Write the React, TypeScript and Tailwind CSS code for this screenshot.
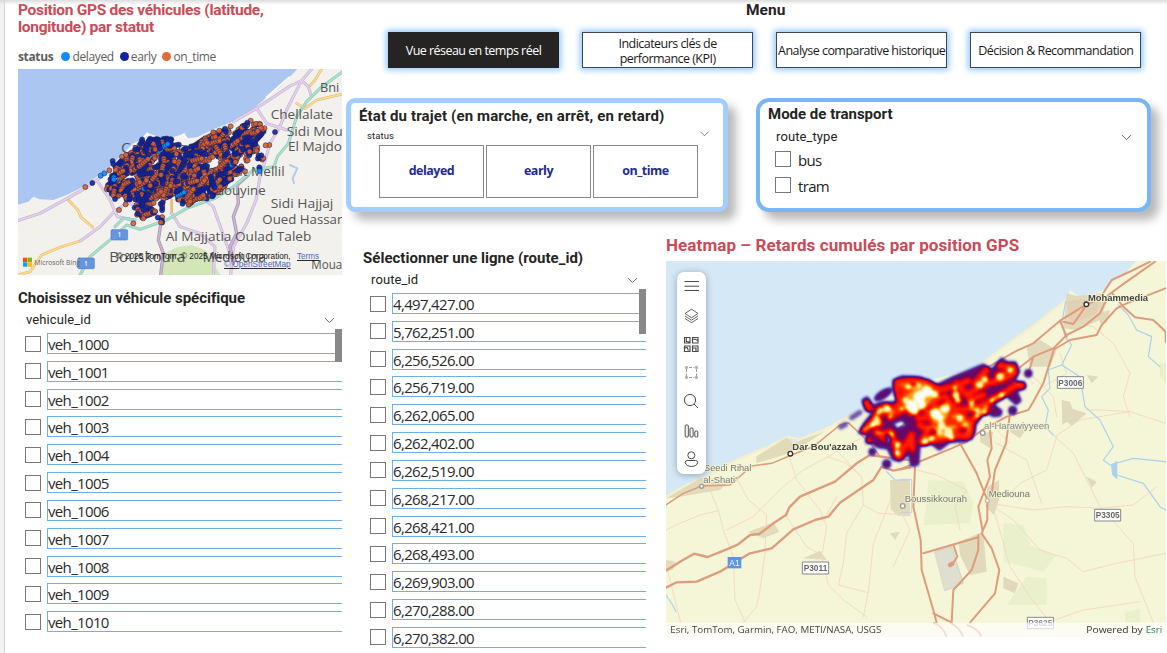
import React from "react";

const vehicles = Array.from({ length: 11 }, (_, i) => `veh_${1000 + i}`);
const routes = [
  "4,497,427.00", "5,762,251.00", "6,256,526.00", "6,256,719.00", "6,262,065.00", "6,262,402.00", "6,262,519.00",
  "6,268,217.00", "6,268,421.00", "6,268,493.00", "6,269,903.00", "6,270,288.00", "6,270,382.00",
];

type Pt = [number, number];

function random(seed: number) {
  let s = seed;
  return () => {
    s = (s * 1664525 + 1013904223) % 4294967296;
    return s / 4294967296;
  };
}

function inside(x: number, y: number, poly: Pt[]) {
  let hit = false;
  for (let i = 0, j = poly.length - 1; i < poly.length; j = i++) {
    const [xi, yi] = poly[i];
    const [xj, yj] = poly[j];
    if (yi > y !== yj > y && x < ((xj - xi) * (y - yi)) / (yj - yi) + xi) hit = !hit;
  }
  return hit;
}

const fleetArea: Pt[] = [
  [316, 572], [335, 520], [350, 485], [375, 475], [420, 430], [425, 415], [510, 415], [560, 445], [630, 405], [690, 385],
  [755, 372], [790, 370], [796, 390], [765, 425], [790, 480], [750, 470], [720, 515], [690, 545], [640, 590], [555, 620], [525, 590],
  [488, 600], [488, 668], [476, 668], [470, 635], [430, 658], [405, 640], [400, 605], [345, 590],
];

const palette = ["#d9602f", "#12239e", "#118dff"];

function buildDots() {
  const r = random(77);
  const dots: { x: number; y: number; c: string }[] = [];
  for (let n = 0; n < 1150; n++) {
    let x = 310 + r() * 490;
    let y = 365 + r() * 305;
    if (!inside(x, y, fleetArea)) continue;
    const pocket = (x > 395 && x < 450 && y > 530 && y < 560) || (x > 600 && x < 660 && y > 475 && y < 500) || (x > 440 && x < 480 && y > 600 && y < 635);
    if (pocket) continue;
    const a = r() < 0.35 ? 1 + r() * 1.2 : -0.9 + r() * 0.8;
    const len = 2 + Math.floor(r() * 5);
    const k = r();
    const main = k < 0.5 ? 0 : k < 0.97 ? 1 : 2;
    for (let i = 0; i < len; i++) {
      if (inside(x, y, fleetArea)) {
        dots.push({ x, y, c: palette[r() < 0.8 ? main : Math.floor(r() * 2.1)] });
      }
      x += Math.cos(a) * 7;
      y += Math.sin(a) * 7;
    }
  }
  const extra: [number, number, number][] = [
    [256, 561, 0], [277, 549, 1], [302, 527, 2], [313, 520, 2], [328, 511, 0], [338, 483, 1], [340, 492, 1], [366, 470, 0],
    [378, 465, 0], [406, 446, 1], [345, 597, 1], [377, 613, 0], [357, 630, 0], [400, 670, 0], [483, 667, 0], [825, 396, 1],
    [808, 435, 0], [797, 436, 0], [779, 507, 2], [778, 502, 1], [778, 513, 2], [640, 397, 0], [692, 379, 0], [752, 362, 0], [735, 514, 0],
    [726, 383, 0], [734, 376, 1], [742, 368, 1], [658, 392, 0], [675, 386, 1],
    [790, 475, 0], [784, 466, 1], [780, 373, 0], [783, 384, 0], [773, 393, 0], [430, 655, 0], [413, 641, 1],
  ];
  extra.forEach(([x, y, c]) => dots.push({ x, y, c: palette[c] }));
  return dots;
}

const dots = buildDots();

function Chevron({ className }: { className?: string }) {
  return (
    <svg viewBox="0 0 12 8" className={className} fill="none" stroke="#555" strokeWidth="1">
      <path d="M.8 1.2 6 6.4l5.2-5.2" />
    </svg>
  );
}

function Checkbox() {
  return <span className="block size-4 shrink-0 border border-[#7a7876] bg-white" />;
}

function CheckList({ items, thumb }: { items: string[]; thumb: string }) {
  return (
    <div className="relative">
      {items.map((item) => (
        <div key={item} className="flex h-[27.84px] items-start">
          <div className="mt-[2.5px]">
            <Checkbox />
          </div>
          <div className="ml-[6px] h-[21px] flex-1 border border-r-0 border-[#6fb0ec] font-['Open_Sans',sans-serif] text-[15px] leading-[20px] tracking-[-0.66px] text-[#2b2a29]">
            {item}
          </div>
        </div>
      ))}
      <div className={`absolute -top-1 right-0 w-[7px] bg-[#8a8886] ${thumb}`} />
    </div>
  );
}

type LabelProps = { x: number; y: number; w: number; size: number; fill?: string; font?: string; weight?: number; children: string; halo?: string };

function Label({ x, y, w, size, fill = "#555", font = "Open Sans", weight = 400, halo, children }: LabelProps) {
  return (
    <text
      x={x}
      y={y}
      textLength={w}
      lengthAdjust="spacingAndGlyphs"
      fontSize={size}
      fontFamily={`"${font}", sans-serif`}
      fontWeight={weight}
      fill={fill}
      stroke={halo}
      strokeWidth={halo ? 5 : undefined}
      paintOrder="stroke"
    >
      {children}
    </text>
  );
}

const lilacRoads =
  "M54 662 120 640 190 602 250 568 290 540 330 510M242 722 300 680 345 632 380 610 450 620M290 540 330 600 352 650 400 660M700 365 770 325 870 258 905 242 935 207M770 325 800 370 860 390M905 242 880 290 860 330 840 380 810 430 790 500 780 530 768 600 740 670 700 740 692 825M600 590 640 620 668 700 690 760M515 640 540 680 600 700 645 740 640 825M905 242 925 260 935 290";
const greenRoads =
  "M1028 215 960 265 920 305 890 350 865 430 832 470 822 500 760 510 700 560 645 595 560 625 500 660 420 688 380 675 330 720 270 770 240 825M345 680 370 655 405 660";
const amberRoads =
  "M205 600 235 632 243 652 278 682M54 825 90 815 125 765 180 742 242 722M965 207 945 240 925 262M1028 282 985 292 950 300 915 325 890 310";
const mauveRoads = "M484 660 475 720 490 760 482 825M745 525 712 555 715 610 700 650 710 700 690 740 700 790";

function FleetMap() {
  return (
    <svg viewBox="18 69 324 206" className="block h-[206px] w-[324px]">
      <g transform="scale(.33333)" fill="none" strokeLinejoin="round" strokeLinecap="round">
        <rect x="54" y="207" width="974" height="620" fill="#f3f1ed" />
        <path d="M54 207H892L868 232 840 262 800 292 770 318 740 345 690 368 640 388 590 412 560 415 548 402 530 408 500 418 445 400 440 412 400 430 360 470 330 500 290 530 250 560 200 585 160 600 120 598 100 590 85 605 54 614Z" fill="#abc6f1" />
        <path d="M868 232 800 292 M540 412 552 402 560 416 M432 412 442 400 450 416" stroke="#fbfaf7" strokeWidth="6" />
        <path d="M486 825 495 760 530 742 575 735 620 752 640 790 662 825Z" fill="#d3e6b8" />
        <g stroke="#f8efd9" strokeWidth="3">
          <path d="M54 700 160 690 250 720 360 740M90 620 100 700 150 760M860 560 940 600 1028 640M830 480 900 540 960 530 1028 560M880 380 940 460 1028 480M740 620 830 600 900 690 1028 720M560 640 620 680 700 690M800 825 830 740 900 700M300 560 320 620 350 650" />
        </g>
        <path d={amberRoads} stroke="#e0b568" strokeWidth="8" />
        <path d="M515 600V640" stroke="#e8bc6a" strokeWidth="8" />
        <path d={amberRoads} stroke="#fbdc94" strokeWidth="5" />
        <path d={lilacRoads} stroke="#c3abd2" strokeWidth="9" />
        <path d={lilacRoads} stroke="#e0d0ea" strokeWidth="6" />
        <path d={mauveRoads} stroke="#ab97b6" strokeWidth="10" />
        <path d={mauveRoads} stroke="#c8b8d0" strokeWidth="5" />
        <path d={greenRoads} stroke="#8ecab5" strokeWidth="9" />
        <path d={greenRoads} stroke="#ade0d0" strokeWidth="5" />
        <path d="m870 495 22 10-14 30 4 15" stroke="#b5c9ea" strokeWidth="6" />
        <rect x="333" y="689" width="50" height="31" rx="4" fill="#6496e0" stroke="#517cc3" strokeWidth="2" />
        <rect x="233" y="774" width="50" height="32" rx="4" fill="#6496e0" stroke="#517cc3" strokeWidth="2" />
      </g>
      <g transform="scale(.33333)">
        <Label x={353} y={712} w={10} size={22} fill="#fff" weight={600}>1</Label>
        <Label x={253} y={797} w={10} size={22} fill="#fff" weight={600}>1</Label>
        <Label x={960} y={275} w={58} size={39}>Bni</Label>
        <Label x={812} y={356} w={187} size={39}>Chellalate</Label>
        <Label x={860} y={408} w={168} size={39}>Sidi Mou</Label>
        <Label x={864} y={454} w={162} size={39}>El Majdo</Label>
        <Label x={363} y={458} w={246} size={46}>Casablanca</Label>
        <Label x={718} y={529} w={136} size={39}>it Mellil</Label>
        <Label x={640} y={585} w={157} size={39}>laouyine</Label>
        <Label x={812} y={625} w={188} size={39}>Sidi Hajjaj</Label>
        <Label x={787} y={672} w={240} size={39}>Oued Hassar</Label>
        <Label x={497} y={723} w={437} size={39}>Al Majjatia Oulad Taleb</Label>
        <Label x={328} y={786} w={228} size={41}>Bouskoura</Label>
        <Label x={608} y={786} w={190} size={41}>Mediouna</Label>
        <Label x={934} y={808} w={93} size={37}>Moua</Label>
        <g stroke="#131c55" strokeOpacity=".75" strokeWidth="2" fillOpacity=".9">
          {dots.map((d, i) => (
            <circle key={i} cx={d.x} cy={d.y} r="7.6" fill={d.c} />
          ))}
        </g>
        <path fill="#f25022" d="M69 773h13v13H69z" />
        <path fill="#7fba00" d="M83 773h13v13H83z" />
        <path fill="#00a4ef" d="M69 787h13v13H69z" />
        <path fill="#ffb900" d="M83 787h13v13H83z" />
        <Label x={103} y={795} w={137} size={24} fill="#666">Microsoft Bing</Label>
        <Label x={350} y={777} w={522} size={25} fill="#222" font="Liberation Sans">© 2025 TomTom, © 2025 Microsoft Corporation,</Label>
        <g textDecoration="underline">
          <Label x={891} y={777} w={66} size={25} fill="#4d66b8" font="Liberation Sans">Terms</Label>
          <Label x={672} y={801} w={200} size={25} fill="#4d66b8" font="Liberation Sans">© OpenStreetMap</Label>
        </g>
      </g>
    </svg>
  );
}

const hotspots: [number, number, number][] = [
  [238, 155, 17], [262, 138, 16], [215, 182, 17], [225, 200, 10], [285, 148, 10], [245, 180, 12], [285, 205, 15], [315, 188, 14],
  [300, 218, 10], [348, 150, 12], [354, 166, 9], [140, 190, 12], [120, 197, 8], [112, 229, 13], [98, 240, 8], [325, 262, 14], [305, 240, 11],
  [335, 278, 8], [298, 262, 9], [480, 94, 12], [396, 175, 8], [412, 195, 7], [435, 202, 7], [360, 220, 10], [375, 240, 8], [410, 212, 6],
  [420, 120, 10], [435, 103, 9], [205, 125, 8], [235, 120, 8], [155, 268, 7], [175, 298, 9], [172, 325, 8], [255, 290, 9], [275, 280, 8],
  [150, 215, 7], [510, 75, 8], [455, 165, 7], [485, 150, 8], [345, 128, 6], [195, 165, 8], [185, 190, 6],
];

function HeatLayer() {
  return (
    <g transform="translate(840 345) scale(.33333)">
      <filter id="heat" x="-60" y="0" width="720" height="420" filterUnits="userSpaceOnUse" colorInterpolationFilters="sRGB">
        <feGaussianBlur stdDeviation="4.2" />
        <feColorMatrix values="0 0 0 1 0  0 0 0 1 0  0 0 0 1 0  0 0 0 1 0" />
        <feComponentTransfer>
          <feFuncR type="table" tableValues=".3 .28 .26 .4 .82 1 1 1 1 1 1" />
          <feFuncG type="table" tableValues=".2 .18 .12 .03 0 .05 .3 .62 .9 1 1" />
          <feFuncB type="table" tableValues=".75 .68 .6 .4 .1 0 0 .1 .55 1 1" />
          <feFuncA type="table" tableValues="0 .6 .95 1 1 1 1 1 1 1 1" />
        </feComponentTransfer>
      </filter>
      <g filter="url(#heat)" fill="none" stroke="#000" strokeLinecap="round" strokeLinejoin="round">
        <path
          fill="#000"
          fillRule="evenodd"
          stroke="none"
          opacity=".3"
          d="M54 264 72 232 95 205 75 196 65 165 82 154 100 180 125 170 165 170 170 145 158 130 158 105 185 93 240 95 290 118 340 94 380 78 430 57 455 72 485 38 502 50 527 50 540 78 525 108 555 112 558 128 532 140 544 168 528 180 500 155 462 178 487 198 482 213 460 215 435 202 408 240 405 265 380 290 330 292 298 316 275 298 240 306 236 360 213 365 206 330 180 350 158 345 142 312 115 308 82 290 78 268ZM160 236 185 226 200 240 172 250ZM130 274 150 264 158 282 142 292Z"
        />
        <g opacity=".31">
          <ellipse cx="130" cy="148" rx="30" ry="11" transform="rotate(-32 130 148)" fill="#000" />
          {[[565, 85, 11], [518, 196, 12], [140, 357, 12], [97, 320, 10], [545, 122, 11], [85, 287, 9]].map(([x, y, r]) => (
            <circle key={x} cx={x} cy={y} r={r} fill="#000" stroke="none" />
          ))}
        </g>
        <path d="M60 202 35 218M17 238 2 246" strokeWidth="14" opacity=".16" />
        <g opacity=".33" strokeWidth="18">
          <path d="M72 258 100 228 115 205 160 195 185 170 170 145 172 112 215 106 262 112 300 135 350 122 385 108M405 115 440 75M480 62 520 68 522 85 485 105 440 115 405 135 380 150 350 115 M315 155 330 175 350 195 400 190 450 170 500 140 530 118M110 262 135 280M152 262 165 295 178 335 198 300 215 270 M240 240 265 255 245 290 310 280 350 270 390 275 395 225 440 190M80 175 88 188M215 270 216 310M160 210 195 190M235 220 285 215 310 235 360 225 300 190 250 165 205 145M390 165 430 150" />
          <path d="M190 130 270 130 300 160 240 190 210 200 195 170ZM260 200 340 190 370 230 330 275 290 250Z" fill="#000" />
        </g>
        <g opacity=".34" strokeWidth="11">
          <path d="M75 252 100 238 120 240M108 215 118 190 145 185 155 202M110 262 150 262M172 295 170 325M185 120 205 120 232 135 255 118M250 287 285 272 330 272M340 215 375 210 385 240M390 175 398 195 430 202M410 120 440 98M470 95 515 72M460 160 490 148M265 245 300 250 345 245M415 210 440 185M345 135 350 165M205 150 195 180 215 205M380 262 385 250" />
          <path d="M215 145 250 125 285 145 255 180 225 200 205 185ZM275 200 325 190 315 220 285 230Z" fill="#000" />
        </g>
        <g fill="#000" stroke="none" fillOpacity=".66">
          {hotspots.map(([x, y, r]) => (
            <circle key={`${x}-${y}`} cx={x} cy={y} r={r + 0.6} />
          ))}
        </g>
      </g>
    </g>
  );
}

const orangeWest =
  "M18 1022 60 995 102 971 143 981 200 958 233 944 270 915 298 912 340 880 378 855 388 832 420 800 525 755 590 700 630 675 700 685 750 690M18 1073 50 1057 110 1055 180 1025 245 985 270 970 335 955 400 898 465 870 505 860 540 818 640 750 665 710 700 722 750 712";
const orangeEast =
  "M0 718 70 690 155 655 200 635 247 600 320 560 385 540 400 515 430 460 460 365M-10 600 120 500 275 405 345 365 400 340 480 272 545 232 600 205 635 150 700 120 750 95M330 550 318 640 285 720 275 790M235 915 235 960 215 1020 160 1080 155 1178M180 640 230 730 262 810 262 870 245 910 275 955 298 1020 285 1090 210 1178M270 600 275 655 262 690 270 740 235 830 248 905M45 710 40 830 62 930 65 1020 100 1140 110 1178M70 970 235 922M160 945 172 980 155 1005M100 1150 155 1178M360 412 400 380 460 355 500 315 550 290 600 250 625 195 680 155 765 95M400 380 385 430M460 360 510 330 590 315 605 285 650 235 680 220 797 175M635 188 670 230 705 262 760 270 797 305V335M480 272 500 320M490 275 520 282 560 225";
const pinkWest =
  "M145 770 175 840 190 900 220 980 225 1110 255 1175M18 900 60 880 120 855 175 842M230 745 265 810 320 855 315 970 300 1080 290 1130 250 1178M200 900 280 860 370 770 430 720 505 680 570 640 640 610M388 680 410 750 480 840 500 890 485 980 505 1065 550 1110 620 1160M505 680 560 700 605 740 610 825 560 910 550 1000 535 1065 625 1088M610 825 655 850 750 855M700 790 640 940 625 1088 610 1160M380 860 440 950 475 970M18 1000 50 1130 62 1178M510 640 605 740M530 800 500 855";
const pinkEast =
  "M0 840 30 900 -20 1010M50 720 110 735 200 780 165 830 180 900M290 600 330 640M465 620 520 670 545 720 600 830 700 940 705 1040 760 1178M270 820 400 840 500 830 600 835 700 825 770 770M280 830 340 870 420 960 500 985 550 1025 650 1000 797 970M320 800 360 760 440 720 470 620M285 850 330 1010 390 1100 450 1178M520 280 580 290 640 340 690 430 670 500 690 560M560 540 600 540 690 545 797 580M480 370 500 430 430 470M390 430 460 500 470 560M300 380 400 460M440 1178 550 1140 720 1115M380 690 425 820M465 620 540 570 690 545M290 640 380 690";

function HeatMap() {
  return (
    <svg viewBox="666 261 500 376" className="block h-[376px] w-[500px]">
      <rect x="666" y="261" width="500" height="376" fill="#f5f5d7" />
      <g transform="translate(660 230) scale(.33333)" fill="none" strokeLinejoin="round" strokeLinecap="round">
        <path
          d="M18 93H1428L1400 125 1370 145 1340 175 1310 190 1255 198 1230 180 1220 210 1180 240 1130 280 1060 330 1000 375 960 405 850 440 760 460 690 480 640 520 550 568 490 600 420 628 395 640 383 620 330 648 280 668 220 695 150 735 80 765 18 800Z"
          fill="#d4e8f6"
        />
        <path d="M18 800 80 765 150 735 220 695 280 668 330 648 383 620 420 628 490 600 550 568 640 520M960 405 1060 330 1130 280 1180 240 1220 210" stroke="#f8efc9" strokeWidth="7" />
        <path d="M288 680 380 622 398 640 495 604 440 640 380 672 290 700ZM18 805 120 745 215 745 180 780 60 800ZM265 905 340 878 358 905 310 925ZM430 985 480 962 500 990ZM690 750h60v108h-36l-22-20ZM18 990l30 5-10 25H18ZM690 910l30-5-15 25Z" fill="#e2dbba" />
        <g transform="translate(720 0)">
          <path d="M495 250 500 190 530 198 600 190 625 205 600 270 530 300 490 295ZM380 350l40-20 50 30-20 50-60 0ZM485 510l25 5 8 22 42 13-45 38-14-12-14 8ZM240 610l40-5-10 50-30-20ZM340 580l40 15-20 30-30-20ZM175 935l75-30 10 120-50 10-30-60ZM262 770l35-20 0 60-15 45-25-25ZM310 1040l45 20-10 30-35-15ZM560 435l35 5-20 20ZM560 740l30 15-15 18ZM590 250l40-10-10 40-20 0Z" fill="#e0d9bb" />
          <path d="M500 215 600 200 590 250 510 285Z" fill="#e3d0b2" />
          <path d="M85 750 190 755 220 820 210 880 70 885 80 820ZM310 880l60 5 20 60 80 30-40 50-120-30ZM380 1040l60 5 0 80-120 0ZM675 1145l45-8v40h-45ZM780 400h18v60l-18-20Z" fill="#ebf0cc" />
          <path d="m105 965 50-15 35 110-55 22Z" fill="#dedfd0" stroke="#c9c9bb" strokeWidth="2" />
          <path d="M0 748h35v100H0" stroke="#c4cddd" strokeWidth="3" />
        </g>
        <g stroke="#f5d5c1" strokeWidth="2.6">
          <path d={pinkWest} />
          <path d={pinkEast} transform="translate(720 0)" />
        </g>
        <g stroke="#a9d3ef" strokeWidth="3.6">
          <path d="M1375 225 1405 255 1430 300 1475 320 1465 380 1500 410M1217 215 1205 280 1215 320 1235 345 1205 405 1165 420 1170 475 1145 500 1165 540 1155 590 1180 615M1205 405 1260 440 1275 530 1320 570 1360 650 1330 690 1350 705 1420 685 1517 695M1370 735 1450 760 1500 830 1517 840M680 725l25 25h40M18 1095l20 30 10 20" />
          <path d="m1355 705 15-10v50l-12-12Z" fill="#aad3f0" />
        </g>
        <g stroke="#de9c7b">
          <path d={orangeWest} strokeWidth="7" />
          <path d={orangeEast} transform="translate(720 0)" strokeWidth="6" />
          <path d="M18 825 70 790 125 768 210 765 275 708 335 700 395 675 460 650 540 585 565 578 635 645 660 680" strokeWidth="4.5" />
          <path d="m870 1005 7-4" strokeWidth="13" />
        </g>
      </g>
      <HeatLayer />
      <g transform="translate(660 230) scale(.33333)">
        <g fill="#fff" strokeWidth="4">
          <circle cx="391" cy="671" r="7" stroke="#333" />
          <circle cx="1279" cy="223" r="7" stroke="#333" />
          <circle cx="125" cy="769" r="6" stroke="#999" />
          <circle cx="728" cy="828" r="7" stroke="#999" />
          <circle cx="968" cy="609" r="7" stroke="#999" />
          <circle cx="982" cy="812" r="6" stroke="#bba" />
        </g>
        <Label x={397} y={660} w={195} size={27} font="Liberation Sans" weight={700} fill="#444" halo="#f5f5d7">Dar Bou'azzah</Label>
        <Label x={1284} y={212} w={180} size={27} font="Liberation Sans" weight={700} fill="#444" halo="#f5f5d7">Mohammedia</Label>
        <Label x={132} y={723} w={142} size={27} font="Liberation Sans" fill="#777" halo="#f5f5d7">Seedi Rihal</Label>
        <Label x={130} y={758} w={101} size={27} font="Liberation Sans" fill="#777" halo="#f5f5d7">al-Shati'</Label>
        <Label x={734} y={816} w={187} size={27} font="Liberation Sans" fill="#777" halo="#f0f1d2">Boussikkourah</Label>
        <Label x={972} y={598} w={196} size={27} font="Liberation Sans" fill="#888" halo="#f0f1d2">al-Harawiyyeen</Label>
        <Label x={986} y={801} w={124} size={27} font="Liberation Sans" fill="#777" halo="#f0f1d2">Mediouna</Label>
        <rect x="203" y="981" width="41" height="34" fill="#5f93e5" />
        <Label x={208} y={1008} w={31} size={27} font="Liberation Sans" fill="#fff">A1</Label>
        <g fill="#fff" stroke="#888" strokeWidth="3">
          <path d="M427 996h79v36h-79zM1192 440h78v35h-78zM1304 838h78v35h-78zM1102 1162h78v34h-78z" />
        </g>
        <Label x={431} y={1023} w={71} size={25} font="Liberation Sans" weight={700} fill="#666">P3011</Label>
        <Label x={1195} y={467} w={72} size={25} font="Liberation Sans" weight={700} fill="#666">P3006</Label>
        <Label x={1307} y={865} w={72} size={25} font="Liberation Sans" weight={700} fill="#666">P3305</Label>
        <Label x={1105} y={1189} w={72} size={25} font="Liberation Sans" weight={700} fill="#888">P3625</Label>
        <path d="M24 1200h80v22H24z" fill="none" stroke="#ccc" strokeWidth="3" />
        <path d="M820 1178q30 10 40 44M870 1178q30 15 40 44M920 1185q35 10 45 37" fill="none" stroke="#dc9a79" strokeWidth="6" />
        <rect x="18" y="1178" width="1500" height="44" fill="#fff" opacity=".68" />
        <Label x={31} y={1210} w={633} size={29} fill="#444">Esri, TomTom, Garmin, FAO, METI/NASA, USGS</Label>
        <Label x={1279} y={1210} w={169} size={29} fill="#333">Powered by</Label>
        <Label x={1457} y={1210} w={50} size={29} fill="#2b7d6b">Esri</Label>
      </g>
    </svg>
  );
}

function MapToolbar() {
  return (
    <div className="absolute left-[11px] top-[11px] h-[202px] w-[29px] rounded-[7px] bg-white shadow-[0_1px_7px_rgba(0,0,0,0.3)]">
      <svg viewBox="677 272 29 202" className="block h-[202px] w-[29px]" fill="none" stroke="#4a4a4a" strokeWidth="1">
        <path d="M684.5 281.5h14.5M684.5 286.2h14.5M684.5 290.5h14.5" />
        <path d="m685 313.5 6.5-4.3 6.5 4.3-6.5 4.2ZM685 316l6.5 4.2 6.5-4.2M685 318.5l6.5 4.2 6.5-4.2" strokeWidth=".85" />
        <path d="M684.5 337.5h5.5v5.5h-5.5ZM692.5 337.5h5.5v5.5h-5.5ZM684.5 346h5.5v5.5h-5.5ZM692.5 346h5.5v5.5h-5.5ZM686.3 338v3.2l3.5 1M693 339.2h2.2l3 1.5M685 348l2-.6 1.5 3M693 348h3v3.3" strokeWidth="1.15" />
        <g stroke="#9a9a9a">
          <path d="M686.5 369v7.5M696.5 369v7.5M689 367.5h5.5M689 377.5h5.5" strokeDasharray="3 1.5" />
          <path d="M685.5 366.5h2v2h-2zM695.5 366.5h2v2h-2zM685.5 376.5h2v2h-2zM695.5 376.5h2v2h-2z" strokeWidth=".5" fill="#aaa" />
        </g>
        <circle cx="690" cy="400" r="5.6" />
        <path d="m694 404 4 4" />
        <rect x="685.2" y="425" width="3.1" height="12" rx="1" />
        <rect x="690" y="428" width="3.1" height="9" rx="1" />
        <rect x="694.8" y="431" width="3" height="6" rx="1" />
        <circle cx="691.3" cy="455.3" r="3.5" />
        <path d="M687.3 460.5h8.4q2 0 2 1.8c0 5.5-12.4 5.5-12.4 0q0-1.8 2-1.8Z" />
      </svg>
    </div>
  );
}

function MenuButton({ active, children }: { active?: boolean; children: React.ReactNode }) {
  return (
    <button
      className={`flex h-9 w-[171px] items-center justify-center whitespace-nowrap border pt-[2px] text-center font-['Open_Sans',sans-serif] text-[12.5px] leading-[15.5px] tracking-[-0.54px] shadow-[0_0_6px_2px_rgba(105,180,255,0.75)] ${
        active ? "border-[#252423] bg-[#252423] text-white" : "border-[#3c4654] bg-white text-[#1b1a19]"
      }`}
    >
      {children}
    </button>
  );
}

export default function App() {
  return (
    <div className="relative flex h-[653px] w-[1167px] overflow-hidden bg-white font-['Roboto',sans-serif] text-[#252423]">
      <div className="pointer-events-none absolute inset-x-0 top-0 h-[5px] bg-gradient-to-b from-[#dcdcdc] to-transparent" />
      <aside className="w-[5px] shrink-0 border-r border-[#d8d6d4] bg-[#f3f2f1]" />
      <section className="w-[341px] shrink-0 pl-[13px]">
        <h2 className="h-[47px] whitespace-nowrap pt-[2px] text-[15.5px] font-bold leading-[17px] tracking-[-0.29px] text-[#cb4a56]">
          Position GPS des véhicules (latitude,
          <br />
          longitude) par statut
        </h2>
        <div className="flex h-[22px] items-start pt-[2px] font-['Open_Sans',sans-serif] text-[12px] leading-4 tracking-[-0.35px] text-[#605e5c]">
          <b className="mr-[8px] font-bold">status</b>
          <i className="mr-[2px] mt-[3px] size-[9px] rounded-full bg-[#118dff]" />
          <span className="mr-[6px]">delayed</span>
          <i className="mr-[2px] mt-[3px] size-[9px] rounded-full bg-[#12239e]" />
          <span className="mr-[6px]">early</span>
          <i className="mr-[2px] mt-[3px] size-[9px] rounded-full bg-[#df6a3a]" />
          <span>on_time</span>
        </div>
        <FleetMap />
        <h3 className="mt-[14px] h-[18px] text-[15px] font-bold leading-[18px] tracking-[-0.03px]">Choisissez un véhicule spécifique</h3>
        <div className="flex h-[26px] w-[317px] items-center justify-between pl-2 text-[13px] tracking-[0.1px]">
          vehicule_id
          <Chevron className="h-[7px] w-[11px]" />
        </div>
        <div className="w-[324px] pl-[7px]">
          <CheckList items={vehicles} thumb="h-[33px]" />
        </div>
      </section>

      <main className="w-[821px] shrink-0">
        <header className="h-[98px]">
          <h1 className="h-8 pl-[400px] pt-px text-[15.5px] font-bold leading-[18px]">Menu</h1>
          <nav className="ml-[42px] flex gap-[23.1px]">
            <MenuButton active>Vue réseau en temps réel</MenuButton>
            <MenuButton>
              Indicateurs clés de
              <br />
              performance (KPI)
            </MenuButton>
            <MenuButton>Analyse comparative historique</MenuButton>
            <MenuButton>Décision &amp; Recommandation</MenuButton>
          </nav>
        </header>
        <div className="flex h-[114px] gap-[28px]">
          <section className="w-[382px] rounded-[9px] border-[5px] border-[#a3cefb] bg-white pl-[8px] pt-[4px] shadow-[8px_8px_10px_rgba(0,0,0,0.28)]">
            <h3 className="h-[18px] whitespace-nowrap text-[15px] font-bold leading-[18px] tracking-[0.13px]">État du trajet (en marche, en arrêt, en retard)</h3>
            <div className="flex h-5 w-[350px] items-center justify-between pl-2 pt-[2px] text-[9.5px] tracking-[0.1px]">
              status
              <Chevron className="mb-1 h-[6px] w-[9px]" />
            </div>
            <div className="ml-5 flex gap-[2px]">
              {["delayed", "early", "on_time"].map((s) => (
                <button
                  key={s}
                  className="h-[53px] w-[105px] border border-[#8a8886] font-['Open_Sans',sans-serif] text-[12.5px] font-bold tracking-[-0.5px] text-[#1d2a9c]"
                >
                  {s}
                </button>
              ))}
            </div>
          </section>
          <section className="w-[395px] rounded-[13px] border-4 border-[#78b6f6] bg-white pl-[8px] pt-[3px] shadow-[8px_8px_10px_rgba(0,0,0,0.28)]">
            <h3 className="h-[18px] text-[15px] font-bold leading-[18px]">Mode de transport</h3>
            <div className="flex h-[28px] w-[364px] items-center justify-between pl-2 text-[13px] tracking-[0.1px]">
              route_type
              <Chevron className="h-[7px] w-[11px]" />
            </div>
            {["bus", "tram"].map((s) => (
              <div key={s} className="flex h-[26px] items-start pl-[7px] font-['Open_Sans',sans-serif] text-[15px] leading-[18px] tracking-[-0.65px]">
                <Checkbox />
                <span className="ml-[7px]">{s}</span>
              </div>
            ))}
          </section>
        </div>
        <div className="flex">
          <section className="w-[320px] shrink-0 pl-[17px] pt-[37px]">
            <h3 className="h-[18px] text-[15px] font-bold leading-[18px] tracking-[0.03px]">Sélectionner une ligne (route_id)</h3>
            <div className="flex h-[26px] w-[275px] items-center justify-between pl-2 text-[13px] tracking-[0.1px]">
              route_id
              <Chevron className="h-[7px] w-[11px]" />
            </div>
            <div className="w-[283px] pl-[7px]">
              <CheckList items={routes} thumb="h-[45px]" />
            </div>
          </section>
          <section className="w-[500px] shrink-0 pt-[24px]">
            <h2 className="h-[25px] text-[17px] font-bold leading-[19px] tracking-[0.09px] text-[#cb4a56]">
              Heatmap – Retards cumulés par position GPS
            </h2>
            <div className="relative">
              <HeatMap />
              <MapToolbar />
            </div>
          </section>
        </div>
      </main>
    </div>
  );
}
